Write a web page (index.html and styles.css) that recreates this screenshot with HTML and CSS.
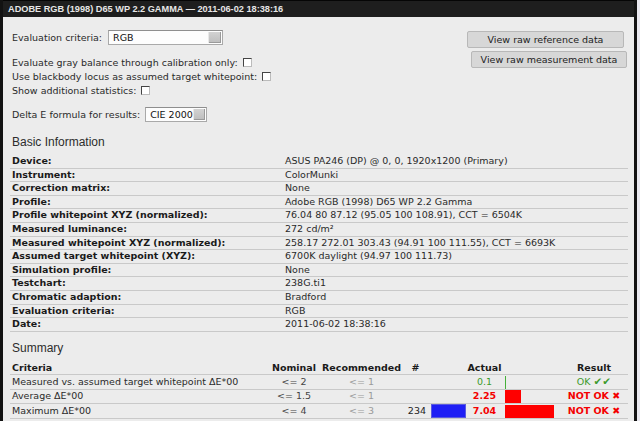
FILE: index.html
```html
<!DOCTYPE html>
<html>
<head>
<meta charset="utf-8">
<link rel="stylesheet" href="styles.css">
</head>
<body>
<div class="frame">
  <div class="titlebar">ADOBE RGB (1998) D65 WP 2.2 GAMMA — 2011-06-02 18:38:16</div>
  <div class="content">
    <div class="top">
      <div class="controls">
        <div class="ctl-row first">
          <span>Evaluation criteria:</span>
          <span class="select wide"><span class="sel-text">RGB</span><span class="sel-btn"></span></span>
        </div>
        <div class="ctl-row check">Evaluate gray balance through calibration only: <span class="cb"></span></div>
        <div class="ctl-row check">Use blackbody locus as assumed target whitepoint: <span class="cb"></span></div>
        <div class="ctl-row check">Show additional statistics: <span class="cb"></span></div>
        <div class="ctl-row delta">
          <span>Delta E formula for results:</span>
          <span class="select narrow"><span class="sel-text">CIE 2000</span><span class="sel-btn"></span></span>
        </div>
      </div>
      <div class="buttons">
        <div class="btn b1">View raw reference data</div>
        <div class="btn b2">View raw measurement data</div>
      </div>
    </div>

    <h2 class="heading">Basic Information</h2>
    <table class="info">
      <tr><th>Device:</th><td>ASUS PA246 (DP) @ 0, 0, 1920x1200 (Primary)</td></tr>
      <tr><th>Instrument:</th><td>ColorMunki</td></tr>
      <tr><th>Correction matrix:</th><td>None</td></tr>
      <tr><th>Profile:</th><td>Adobe RGB (1998) D65 WP 2.2 Gamma</td></tr>
      <tr><th>Profile whitepoint XYZ (normalized):</th><td>76.04 80 87.12 (95.05 100 108.91), CCT = 6504K</td></tr>
      <tr><th>Measured luminance:</th><td>272 cd/m²</td></tr>
      <tr><th>Measured whitepoint XYZ (normalized):</th><td>258.17 272.01 303.43 (94.91 100 111.55), CCT = 6693K</td></tr>
      <tr><th>Assumed target whitepoint (XYZ):</th><td>6700K daylight (94.97 100 111.73)</td></tr>
      <tr><th>Simulation profile:</th><td>None</td></tr>
      <tr><th>Testchart:</th><td>238G.ti1</td></tr>
      <tr><th>Chromatic adaption:</th><td>Bradford</td></tr>
      <tr><th>Evaluation criteria:</th><td>RGB</td></tr>
      <tr><th>Date:</th><td>2011-06-02 18:38:16</td></tr>
    </table>

    <h2 class="heading summary-h">Summary</h2>
    <table class="summary">
      <colgroup>
        <col class="c-crit"><col class="c-nom"><col class="c-rec"><col class="c-num"><col class="c-nbar"><col class="c-act"><col class="c-abar"><col class="c-res">
      </colgroup>
      <tr class="head">
        <th class="left">Criteria</th><th>Nominal</th><th>Recommended</th><th>#</th><th></th><th>Actual</th><th></th><th>Result</th>
      </tr>
      <tr>
        <td class="left">Measured vs. assumed target whitepoint ΔE*00</td>
        <td class="nom">&lt;= 2</td><td class="rec">&lt;= 1</td><td></td><td></td>
        <td class="act ok">0.1</td>
        <td class="barcell"><span class="gline"></span></td>
        <td class="res ok">OK <span class="ticks">✔✔</span></td>
      </tr>
      <tr>
        <td class="left">Average ΔE*00</td>
        <td class="nom">&lt;= 1.5</td><td class="rec">&lt;= 1</td><td></td><td></td>
        <td class="act bad">2.25</td>
        <td class="barcell"><span class="rbar" style="width:16px"></span></td>
        <td class="res bad">NOT OK <span class="x">✖</span></td>
      </tr>
      <tr>
        <td class="left">Maximum ΔE*00</td>
        <td class="nom">&lt;= 4</td><td class="rec">&lt;= 3</td><td class="num">234</td>
        <td class="barcell"><span class="bbar"></span></td>
        <td class="act bad">7.04</td>
        <td class="barcell"><span class="rbar" style="width:49px"></span></td>
        <td class="res bad">NOT OK <span class="x">✖</span></td>
      </tr>
    </table>
  </div>
</div>
</body>
</html>
```

FILE: styles.css
```css
html, body {
  margin: 0;
  padding: 0;
}
body {
  background: #e9e8ef;
  width: 640px;
  height: 421px;
  overflow: hidden;
  font-family: "DejaVu Sans", Verdana, sans-serif;
  font-size: 9.5px;
  color: #2a2a2a;
}
.frame {
  width: 631px;
  border-left: 3px solid #121212;
  border-right: 3px solid #121212;
  background: #ececec;
  height: 421px;
}
.titlebar {
  height: 16px;
  line-height: 16px;
  background: #1e1e1e;
  border-top: 1px solid #050505;
  color: #e6e6e6;
  font-family: "Liberation Sans", Arial, sans-serif;
  font-weight: bold;
  font-size: 9.2px;
  padding-left: 5px;
  white-space: nowrap;
}
.content {
  padding: 0 6px 0 7px;
}
.top {
  display: flex;
  justify-content: space-between;
  padding-top: 12px;
}
.controls {
  padding-left: 2px;
}
.ctl-row {
  display: flex;
  align-items: center;
  white-space: nowrap;
}
.ctl-row.first {
  height: 17px;
  margin-bottom: 9px;
}
.ctl-row.check {
  height: 14px;
}
.ctl-row.delta {
  height: 17px;
  margin-top: 9px;
}
.select {
  display: inline-flex;
  height: 15px;
  margin-left: 6px;
  background: #fdfdfd;
  border: 1px solid #a9a9a9;
  border-top-color: #8e8e8e;
  box-sizing: border-box;
}
.select.wide { width: 115px; }
.select.narrow { width: 62px; margin-left: 5px; }
.sel-text {
  flex: 1;
  padding-left: 4px;
  line-height: 13px;
  color: #111;
}
.sel-btn {
  width: 12px;
  margin: 1px 1px 1px 0;
  background: linear-gradient(#d2d2d2, #bdbdbd);
  border-left: 1px solid #e8e8e8;
  box-shadow: inset -1px -1px 0 #9a9a9a;
}
.cb {
  display: inline-block;
  width: 7px;
  height: 7px;
  margin-left: 5px;
  background: #fff;
  border-top: 1px solid #444;
  border-left: 1px solid #444;
  border-right: 1px solid #bbb;
  border-bottom: 1px solid #bbb;
}
.buttons {
  display: flex;
  flex-direction: column;
  align-items: flex-end;
  gap: 3px;
  padding-top: 2px;
}
.btn {
  height: 17px;
  line-height: 15px;
  background: #d7d7d7;
  border: 1px solid #b8b8b8;
  border-radius: 2px;
  text-align: center;
  color: #222;
  box-sizing: border-box;
  white-space: nowrap;
}
.btn.b1 { width: 157px; margin-right: 4px; }
.btn.b2 { width: 156px; margin-right: 1px; }
.heading {
  font-family: "Liberation Sans", Arial, sans-serif;
  font-weight: normal;
  font-size: 12px;
  color: #2d2d2d;
  margin: 0;
  padding-left: 2px;
  height: 16px;
  line-height: 16px;
}
h2.heading { margin-top: 11px; margin-bottom: 5px; }
.info {
  width: 618px;
  border-collapse: collapse;
}
.info th, .info td {
  padding: 0 0 0 2px;
  height: 12.6px;
  line-height: 12.6px;
  border-bottom: 1px solid #c9c9c9;
  text-align: left;
  white-space: nowrap;
  vertical-align: middle;
}
.info th {
  width: 271px;
  font-weight: bold;
  color: #1a1a1a;
}
.info td { color: #2a2a2a; }
h2.summary-h { margin-top: 8px; margin-bottom: 6px; }
.summary {
  width: 618px;
  table-layout: fixed;
  border-collapse: collapse;
}
.c-crit { width: 258px; }
.c-nom { width: 52px; }
.c-rec { width: 83px; }
.c-num { width: 25px; }
.c-nbar { width: 38px; }
.c-act { width: 37px; }
.c-abar { width: 57px; }
.c-res { width: 68px; }
.summary th, .summary td {
  padding: 0;
  height: 12.7px;
  line-height: 12.7px;
  border-bottom: 1px solid #c9c9c9;
  text-align: center;
  white-space: nowrap;
  vertical-align: middle;
}
.summary th {
  font-weight: bold;
  color: #1a1a1a;
}
.summary .left { text-align: left; padding-left: 2px; }
.summary td.left { color: #2a2a2a; }
.nom { color: #444; }
.rec { color: #9a9a9a; }
.num { text-align: right !important; padding-right: 2px !important; color: #222; }
.act.ok { color: #3d9a2c; }
.act.bad { color: #f40000; font-weight: bold; }
.res.ok { color: #3d9a2c; }
.res.bad { color: #f40000; font-weight: bold; }
.ticks { color: #3d9a2c; font-weight: bold; font-size: 10.5px; }
.barcell { text-align: left !important; padding-left: 2px !important; }
.gline {
  display: block;
  width: 1px;
  height: 13px;
  background: #45b03a;
}
.rbar {
  display: block;
  height: 13px;
  background: #ff0000;
}
.bbar {
  display: block;
  width: 33px;
  height: 12px;
  margin-left: 1px;
  background: #1f1ff5;
  border: 1px solid #5a5ae0;
}
```
